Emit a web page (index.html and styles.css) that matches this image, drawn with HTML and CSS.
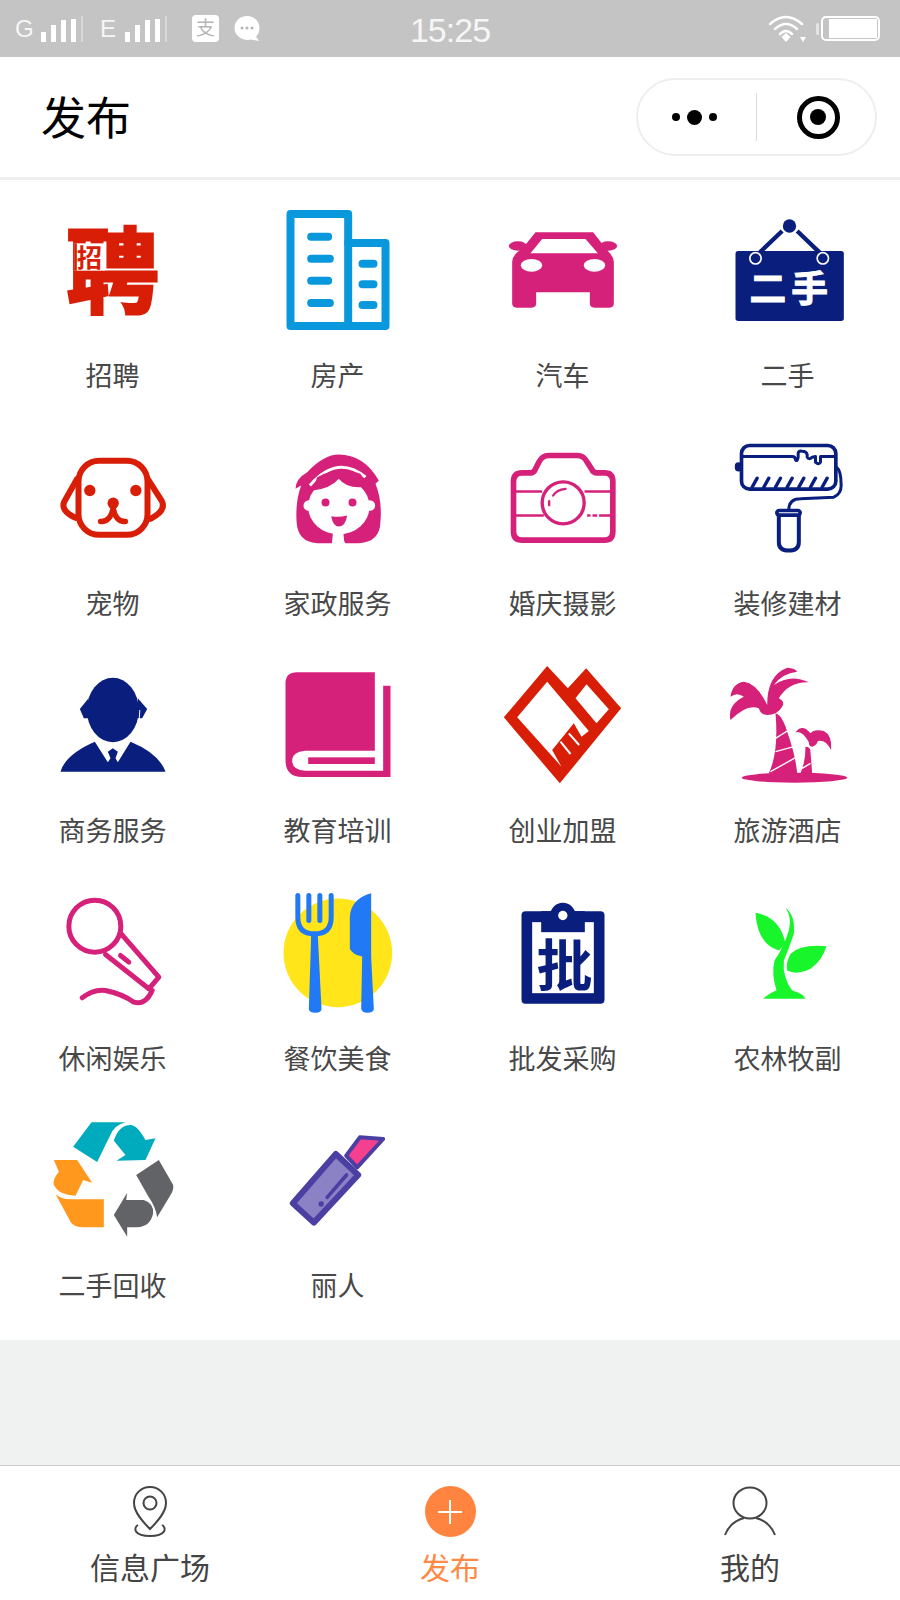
FILE: index.html
```html
<!DOCTYPE html>
<html lang="zh-CN">
<head>
  <meta charset="UTF-8">
  <meta name="viewport" content="width=device-width,initial-scale=1">
  <title>发布</title>
  <link rel="stylesheet" href="styles.css">
</head>
<body>
  <div class="status-bar">
    <div class="status-left">
      <span class="net">G</span>
      <svg class="bars" width="42" height="30" viewBox="0 0 42 30"><rect x="0" y="18" width="5" height="10"/><rect x="10" y="11" width="5" height="17"/><rect x="20" y="6" width="5" height="22"/><rect x="30" y="5" width="5" height="23"/><rect class="faint" x="40" y="2" width="2" height="26"/></svg>
      <span class="net net-e">E</span>
      <svg class="bars" width="42" height="30" viewBox="0 0 42 30"><rect x="0" y="18" width="5" height="10"/><rect x="10" y="11" width="5" height="17"/><rect x="20" y="6" width="5" height="22"/><rect x="30" y="5" width="5" height="23"/><rect class="faint" x="40" y="2" width="2" height="26"/></svg>
      <svg class="app-pay" width="27" height="27" viewBox="0 0 27 27"><rect width="27" height="27" rx="4" fill="#fff"/><text x="13.500" y="20" text-anchor="middle" font-size="19" fill="#b5b5b5">支</text></svg>
      <svg class="app-chat" width="26" height="27" viewBox="0 0 26 27"><path d="M13 1C20 1 25.500 6 25.500 13C25.500 17 24 20 22 21.500L25 26L17 24.500C9 26.500 .5 21 .5 13C.5 6 6 1 13 1Z" fill="#fff"/><circle cx="8" cy="13" r="1.500" fill="#b5b5b5"/><circle cx="13" cy="13" r="1.500" fill="#b5b5b5"/><circle cx="18" cy="13" r="1.500" fill="#b5b5b5"/></svg>
    </div>
    <div class="status-time">15:25</div>
    <div class="status-right">
      <svg width="38" height="28" viewBox="0 0 38 28"><g fill="none" stroke="#fff" stroke-width="2.500" stroke-linecap="round"><path d="M1 9Q17 -5 33 9"/><path d="M6 14Q17 4 28 14"/><path d="M11 19Q17 13 23 19"/></g><path d="M12.500 22L17 18L21.500 22L17 27Z" fill="#fff"/><path d="M31 22H37L34 27Z" fill="#fff"/></svg>
      <div class="battery-tip"></div>
      <div class="battery"><div class="battery-fill"></div></div>
    </div>
  </div>

  <header class="title-bar">
    <h1>发布</h1>
    <div class="capsule">
      <div class="capsule-part capsule-more">
        <span class="dot"></span><span class="dot dot-big"></span><span class="dot"></span>
      </div>
      <div class="capsule-line"></div>
      <div class="capsule-part capsule-close">
        <span class="target"></span>
      </div>
    </div>
  </header>

  <main class="content">
    <div class="cat-grid">
      <a class="cat-item">
        <svg class="cat-icon" viewBox="52.500 15 390 390">
          <text x="246" y="334" text-anchor="middle" font-size="278" font-weight="700" fill="#d81e06" stroke="#d81e06" stroke-width="9">聘</text>
          <rect x="131" y="145" width="92" height="82" fill="#fff"/>
          <rect x="131" y="145" width="8" height="82" fill="#d81e06"/>
          <text x="177" y="216" text-anchor="middle" font-size="76" font-weight="700" fill="#d81e06">招</text>
        </svg>
        <span>招聘</span>
      </a>
      <a class="cat-item">
        <svg class="cat-icon" viewBox="727.500 15 390 390">
          <g fill="none" stroke="#0a98dc" stroke-width="24" stroke-linejoin="round" stroke-linecap="round">
            <path d="M780 57H953V393H780Z"/>
            <path d="M953 144H1065V393H953"/>
            <path d="M842 125H893M842 191H898M842 257H893M842 324H898"/>
            <path d="M996 206H1029M996 268H1029M996 330H1029"/>
          </g>
        </svg>
        <span>房产</span>
      </a>
      <a class="cat-item">
        <svg class="cat-icon" viewBox="52.500 15 390 390">
          <ellipse cx="112" cy="153" rx="27" ry="14" fill="#d6217a"/>
          <ellipse cx="383" cy="153" rx="27" ry="14" fill="#d6217a"/>
          <path d="M165 112H338L372 155L388 175Q400 188 400 200V325Q400 338 387 338H342Q328 338 328 325V292H167V325Q167 338 153 338H108Q95 338 95 325V200Q95 188 107 175L130 155Z" fill="#d6217a"/>
          <path d="M185 132H315L352 175H150Z" fill="#fff"/>
          <ellipse cx="153" cy="211" rx="32" ry="19" fill="#fff"/>
          <ellipse cx="342" cy="211" rx="32" ry="19" fill="#fff"/>
        </svg>
        <span>汽车</span>
      </a>
      <a class="cat-item">
        <svg class="cat-icon" viewBox="727.500 15 390 390">
          <rect x="765" y="168" width="325" height="210" rx="8" fill="#0a1f7d"/>
          <path d="M905 108L835 175M950 108L1020 175" stroke="#0a1f7d" stroke-width="13" fill="none"/>
          <circle cx="927" cy="93" r="20" fill="#0a1f7d"/>
          <circle cx="825" cy="190" r="17" fill="#0a1f7d" stroke="#fff" stroke-width="5"/>
          <circle cx="1027" cy="190" r="17" fill="#0a1f7d" stroke="#fff" stroke-width="5"/>
          <text x="932" y="322" text-anchor="middle" font-size="110" font-weight="700" letter-spacing="15" fill="#fff" stroke="#fff" stroke-width="3">二手</text>
        </svg>
        <span>二手</span>
      </a>

      <a class="cat-item">
        <svg class="cat-icon" viewBox="52.500 -7.500 390 390">
          <g fill="none" stroke="#d81e06" stroke-width="18" stroke-linecap="round" stroke-linejoin="round">
            <rect x="144" y="91" width="207" height="222" rx="62"/>
            <path d="M140 145L102 212Q88 240 135 262"/>
            <path d="M355 150L394 212Q408 240 360 265"/>
            <path stroke-width="16" d="M210 273Q240 275 248 232Q255 275 285 273"/>
          </g>
          <circle cx="178" cy="180" r="17" fill="#d81e06"/>
          <circle cx="316" cy="180" r="17" fill="#d81e06"/>
          <circle cx="248" cy="218" r="17" fill="#d81e06"/>
        </svg>
        <span>宠物</span>
      </a>
      <a class="cat-item">
        <svg class="cat-icon" viewBox="727.500 -7.500 390 390">
          <path d="M795 175Q795 145 830 125Q880 72 925 72Q1000 72 1045 150L1035 160Q1055 210 1050 270Q1050 335 985 338H945L925 310L905 338H860Q800 335 798 270Q795 210 812 165Z" fill="#d6217a"/>
          <ellipse cx="925" cy="228" rx="92" ry="84" fill="#fff"/>
          <circle cx="835" cy="225" r="16" fill="#fff"/>
          <circle cx="1018" cy="225" r="16" fill="#fff"/>
          <path d="M908 300H938L942 342H904Z" fill="#fff"/>
          <path d="M838 165Q920 70 1005 140" fill="none" stroke="#fff" stroke-width="9"/>
          <path d="M846 180Q900 175 925 145Q950 178 1012 168L990 130Q925 105 860 140Z" fill="#d6217a"/>
          <circle cx="885" cy="216" r="12" fill="#d6217a"/>
          <circle cx="966" cy="216" r="12" fill="#d6217a"/>
          <path d="M902 257Q925 262 950 255Q945 288 925 288Q908 288 902 257Z" fill="#d6217a"/>
        </svg>
        <span>家政服务</span>
      </a>
      <a class="cat-item">
        <svg class="cat-icon" viewBox="52.500 -7.500 390 390">
          <g fill="none" stroke="#d6217a">
            <path stroke-width="17" d="M125 127H150Q160 127 165 115L175 95Q185 75 205 75H290Q310 75 320 95L333 115Q338 127 350 127H372Q397 127 397 153V303Q397 329 372 329H125Q99 329 99 303V153Q99 127 125 127Z"/>
            <path stroke-width="8" d="M100 183H185M312 183H392M100 255H190M320 255H330M336 255H350M356 255H392"/>
            <circle stroke-width="10" cx="248" cy="217" r="63"/>
            <path stroke-width="7" stroke-linecap="round" d="M218 195Q228 178 255 175M206 212V224"/>
          </g>
        </svg>
        <span>婚庆摄影</span>
      </a>
      <a class="cat-item">
        <svg class="cat-icon" viewBox="727.500 -7.500 390 390">
          <g fill="none" stroke="#0a1f7d" stroke-width="10" stroke-linecap="round" stroke-linejoin="round">
            <rect x="783" y="45" width="283" height="131" rx="24" stroke-width="11"/>
            <path stroke-width="9" d="M785 78H935Q945 78 945 88Q950 95 953 80V68Q955 60 965 62Q978 62 980 72V80Q985 90 995 80L1005 78V95Q1015 105 1020 95V78H1065"/>
            <path d="M815 170L830 143M850 170L865 143M885 170L900 143M920 170L935 143M955 170L970 143M990 170L1005 143M1025 170L1040 143"/>
            <rect x="768" y="100" width="12" height="18" rx="6" fill="#0a1f7d"/>
            <path stroke-width="9" d="M1068 110Q1082 120 1082 165Q1082 190 1060 200L960 205Q925 205 925 238"/>
            <rect x="889" y="240" width="70" height="14" rx="7" stroke-width="11"/>
            <path stroke-width="12" d="M895 255V335Q895 360 925 360Q955 360 955 335V255"/>
          </g>
        </svg>
        <span>装修建材</span>
      </a>

      <a class="cat-item">
        <svg class="cat-icon" viewBox="52.500 0 390 390">
          <path d="M148 162L174 130V190H160ZM322 130L350 162L335 190H322Z" fill="#0a1f7d"/>
          <ellipse cx="247" cy="165" rx="78" ry="97" fill="#0a1f7d"/>
          <path d="M90 350Q105 298 193 260L232 322L240 310L232 290L247 280L262 290L255 310L262 322L300 260Q385 295 405 350Z" fill="#0a1f7d"/>
          <path d="M328 165Q330 225 285 262" fill="none" stroke="#fff" stroke-width="3"/>
        </svg>
        <span>商务服务</span>
      </a>
      <a class="cat-item">
        <svg class="cat-icon" viewBox="727.500 0 390 390">
          <path d="M800 52H1033V287H825Q785 290 785 317Q785 345 825 347H1058V92H1080V366H815Q765 366 765 315V85Q765 52 800 52Z" fill="#d6217a"/>
          <rect x="833" y="307" width="200" height="20" fill="#d6217a"/>
        </svg>
        <span>教育培训</span>
      </a>
      <a class="cat-item">
        <svg class="cat-icon" viewBox="52.500 0 390 390">
          <path d="M200 33L262 100L317 40L422 160L238 385L70 187Z" fill="#d81e06"/>
          <path d="M110 187L200 80L325 228L303 245L280 205L215 285L243 335Z" fill="#fff"/>
          <path d="M285 130L318 88L385 163L348 205Z" fill="#fff"/>
          <path d="M240 260L270 297M265 235L296 270" stroke="#fff" stroke-width="6" fill="none"/>
        </svg>
        <span>创业加盟</span>
      </a>
      <a class="cat-item">
        <svg class="cat-icon" viewBox="727.500 0 390 390">
          <g fill="#d6217a">
            <path d="M860 150Q860 60 920 38Q945 40 950 50Q905 55 880 90Q930 55 985 82Q925 80 895 130Q915 140 905 155Q890 180 860 180Q840 180 835 160Q800 145 750 195Q740 150 790 125Q770 110 750 125Q755 85 790 80Q830 85 860 150Z"/>
            <path d="M885 175Q905 180 920 230Q945 300 950 355H865Q895 290 885 175Z"/>
            <path d="M975 275Q990 275 990 290L995 355H960Q975 320 975 275Z"/>
            <path d="M985 262Q965 225 945 232Q965 205 990 235Q1000 222 1030 228Q1055 240 1052 285Q1035 252 1012 258Q1010 270 995 275Q985 275 985 262Z"/>
            <ellipse cx="942" cy="368" rx="158" ry="15"/>
          </g>
          <path d="M885 250L925 225M885 290L940 275M870 350L945 308M965 340L990 325" stroke="#fff" stroke-width="4" fill="none"/>
        </svg>
        <span>旅游酒店</span>
      </a>

      <a class="cat-item">
        <svg class="cat-icon" viewBox="52.500 7.500 390 390">
          <g fill="none" stroke="#d6217a" stroke-width="15" stroke-linecap="round" stroke-linejoin="round">
            <circle cx="193" cy="137" r="78"/>
            <path d="M225 222L355 325L385 290L272 160"/>
            <path d="M270 225L295 245"/>
            <path d="M155 352Q190 325 225 330Q275 340 310 365Q345 375 365 330"/>
          </g>
        </svg>
        <span>休闲娱乐</span>
      </a>
      <a class="cat-item">
        <svg class="cat-icon" viewBox="727.500 7.500 390 390">
          <circle cx="922" cy="217" r="163" fill="#ffe51a"/>
          <g fill="#2279f5">
            <path d="M842 165H862L873 385Q873 397 855 397Q835 397 835 385Z"/>
            <path d="M1022 38Q960 55 958 110V205Q965 222 995 228L992 385Q995 397 1010 397Q1030 397 1030 385L1022 230Z"/>
          </g>
          <g fill="none" stroke="#2279f5" stroke-width="15" stroke-linecap="round">
            <path d="M802 45V110Q802 160 852 160Q902 160 902 110V45"/>
            <path d="M835 45V120M868 45V120"/>
          </g>
        </svg>
        <span>餐饮美食</span>
      </a>
      <a class="cat-item">
        <svg class="cat-icon" viewBox="52.500 7.500 390 390">
          <rect x="123" y="92" width="249" height="278" rx="12" fill="#0a1f7d"/>
          <circle cx="247" cy="105" r="38" fill="#0a1f7d"/>
          <rect x="155" y="125" width="185" height="213" fill="#fff"/>
          <rect x="182" y="92" width="131" height="63" fill="#0a1f7d"/>
          <circle cx="247" cy="105" r="14" fill="#fff"/>
          <text x="252" y="317" text-anchor="middle" font-size="168" font-weight="700" fill="#0a1f7d">批</text>
        </svg>
        <span>批发采购</span>
      </a>
      <a class="cat-item">
        <svg class="cat-icon" viewBox="727.500 7.500 390 390">
          <g fill="#19f52b">
            <path d="M915 82Q945 105 940 160Q925 205 910 240Q905 290 935 330Q970 340 975 355H848Q870 335 888 330Q872 280 882 240Q910 200 925 150Q935 110 915 82Z"/>
            <path d="M825 97Q900 110 915 190L895 210Q830 190 825 97Z"/>
            <path d="M1038 197Q960 190 930 220Q915 250 920 270Q950 285 990 265Q1025 240 1038 197Z"/>
          </g>
        </svg>
        <span>农林牧副</span>
      </a>

      <a class="cat-item">
        <svg class="cat-icon" viewBox="52.500 0 390 390">
          <g fill="#00abbd">
            <path d="M128 110L183 37H285Q250 45 237 80L200 156Z"/>
            <path d="M250 92Q265 45 300 45Q320 45 345 90L375 85L345 150L258 152L285 135Z"/>
          </g>
          <g fill="#ff981c">
            <path d="M70 150H140L185 218L158 210L135 257Q85 255 70 225Q65 210 85 185Z"/>
            <path d="M75 252Q90 268 120 268H220V352H160Q130 352 120 335Z"/>
          </g>
          <g fill="#626366">
            <path d="M385 150L428 225Q430 240 420 255L380 322Q375 290 355 262L317 195Z"/>
            <path d="M250 315L290 248L287 270H340Q370 280 368 310Q360 350 320 352H290V380Z"/>
          </g>
        </svg>
        <span>二手回收</span>
      </a>
      <a class="cat-item">
        <svg class="cat-icon" viewBox="727.500 0 390 390">
          <g stroke="#4c3fa3" stroke-linejoin="round">
            <path d="M988 82L1058 87L980 172L947 137Z" fill="#f5408f" stroke-width="12"/>
            <path d="M916 132L983 195L850 338L787 280Z" fill="#8a82c4" stroke-width="18"/>
          </g>
          <path d="M890 262L948 195" stroke="#4c3fa3" stroke-width="11" stroke-linecap="round"/>
          <circle cx="872" cy="282" r="8" fill="#4c3fa3"/>
        </svg>
        <span>丽人</span>
      </a>
    </div>
  </main>

  <nav class="tab-bar">
    <a class="tab">
      <svg class="tab-icon" viewBox="0 0 60 56">
        <g fill="none" stroke="#444" stroke-width="2">
          <path d="M30 3C21 3 14 10 14 19C14 29 24 39 30 45C36 39 46 29 46 19C46 10 39 3 30 3Z"/>
          <circle cx="30" cy="19" r="6.500"/>
          <path d="M18 41C13 44 14 52 30 52C46 52 47 44 42 41"/>
        </g>
      </svg>
      <span>信息广场</span>
    </a>
    <a class="tab tab-active">
      <div class="tab-plus"></div>
      <span>发布</span>
    </a>
    <a class="tab">
      <svg class="tab-icon" viewBox="0 0 60 56">
        <g fill="none" stroke="#444" stroke-width="2">
          <ellipse cx="30" cy="19" rx="16.500" ry="15.500"/>
          <path d="M5 51C9 41 16 36 24 34M55 51C51 41 44 36 36 34"/>
        </g>
      </svg>
      <span>我的</span>
    </a>
  </nav>
</body>
</html>
```

FILE: styles.css
```css
html, body {
  margin: 0;
  padding: 0;
}
body {
  width: 900px;
  height: 1600px;
  display: flex;
  flex-direction: column;
  background: #f0f2f2;
  font-family: "Noto Sans CJK SC", "Liberation Sans", sans-serif;
  overflow: hidden;
}

/* status bar */
.status-bar {
  height: 57px;
  flex: none;
  display: grid;
  grid-template-columns: 1fr auto 1fr;
  align-items: center;
  background: #c4c4c4;
  color: #f6f6f6;
  font-family: "Liberation Sans", sans-serif;
}
.status-left {
  display: flex;
  align-items: center;
  padding-left: 15px;
}
.net {
  font-size: 24px;
  line-height: 30px;
  width: 26px;
}
.net-e {
  margin-left: 17px;
  width: 25px;
}
.bars rect {
  fill: #fff;
}
.bars rect.faint {
  opacity: 0.35;
}
.app-pay {
  margin-left: 25px;
}
.app-pay text {
  font-family: "Noto Sans CJK SC", sans-serif;
}
.app-chat {
  margin-left: 15px;
}
.status-time {
  padding-top: 3px;
  font-size: 34px;
  letter-spacing: -1px;
}
.status-right {
  display: flex;
  align-items: center;
  justify-content: flex-end;
  padding-right: 20px;
}
.battery-tip {
  width: 3px;
  height: 12px;
  margin-left: 9px;
  margin-right: 2px;
  border-radius: 2px 0 0 2px;
  background: #e4e4e4;
}
.battery {
  box-sizing: border-box;
  width: 59px;
  height: 25px;
  padding: 1px;
  border: 2px solid #fff;
  border-radius: 5px;
  display: flex;
  justify-content: flex-end;
}
.battery-fill {
  width: 48px;
  background: #fff;
}

/* title bar */
.title-bar {
  box-sizing: border-box;
  height: 123px;
  flex: none;
  display: flex;
  align-items: center;
  justify-content: space-between;
  padding: 0 23px 0 41px;
  background: #fff;
  border-bottom: 3px solid #eee;
}
.title-bar h1 {
  margin: 0 0 2px;
  font-size: 45px;
  font-weight: 400;
  line-height: 60px;
  color: #000;
}
.capsule {
  box-sizing: border-box;
  width: 241px;
  height: 78px;
  display: flex;
  align-items: center;
  border: 2px solid #eee;
  border-radius: 39px;
}
.capsule-part {
  flex: 1;
  display: flex;
  align-items: center;
  justify-content: center;
  gap: 7px;
}
.capsule-more {
  padding-right: 4px;
}
.capsule-close {
  padding-left: 5px;
}
.capsule-line {
  width: 1px;
  height: 48px;
  background: #ddd;
}
.dot {
  width: 8px;
  height: 8px;
  border-radius: 50%;
  background: #000;
}
.dot-big {
  width: 15px;
  height: 15px;
}
.target {
  box-sizing: border-box;
  width: 43px;
  height: 43px;
  border: 5px solid #000;
  border-radius: 50%;
  display: flex;
  align-items: center;
  justify-content: center;
}
.target::after {
  content: "";
  width: 16px;
  height: 16px;
  border-radius: 50%;
  background: #000;
}

/* category grid */
.content {
  flex: 1;
}
.cat-grid {
  display: grid;
  grid-template-columns: repeat(4, 225px);
  grid-auto-rows: 227.5px;
  padding-bottom: 22.5px;
  background: #fff;
}
.cat-item {
  display: flex;
  flex-direction: column;
  align-items: center;
  padding-top: 20px;
}
.cat-icon {
  width: 130px;
  height: 130px;
  flex: none;
  overflow: visible;
}
.cat-icon text {
  font-family: "Noto Sans CJK SC", sans-serif;
}
.cat-item span {
  margin-top: 25px;
  font-size: 27px;
  line-height: 40px;
  color: #484848;
}

/* tab bar */
.tab-bar {
  box-sizing: border-box;
  height: 135px;
  flex: none;
  display: grid;
  grid-template-columns: repeat(3, 300px);
  background: #fff;
  border-top: 1px solid #ccc;
}
.tab {
  display: flex;
  flex-direction: column;
  align-items: center;
  padding-top: 18px;
  color: #444;
}
.tab span {
  margin-top: 6px;
  font-size: 30px;
  line-height: 40px;
}
.tab-icon {
  width: 60px;
  height: 56px;
  flex: none;
}
.tab-active {
  color: #ff8a45;
}
.tab-plus {
  position: relative;
  width: 51px;
  height: 51px;
  margin: 2px 0 3px;
  flex: none;
  border-radius: 50%;
  background: #ff8440;
}
.tab-plus::before,
.tab-plus::after {
  content: "";
  position: absolute;
  background: #fff;
}
.tab-plus::before {
  left: 13.5px;
  top: 24.5px;
  width: 24px;
  height: 2px;
}
.tab-plus::after {
  left: 24.5px;
  top: 13.5px;
  width: 2px;
  height: 24px;
}
```
